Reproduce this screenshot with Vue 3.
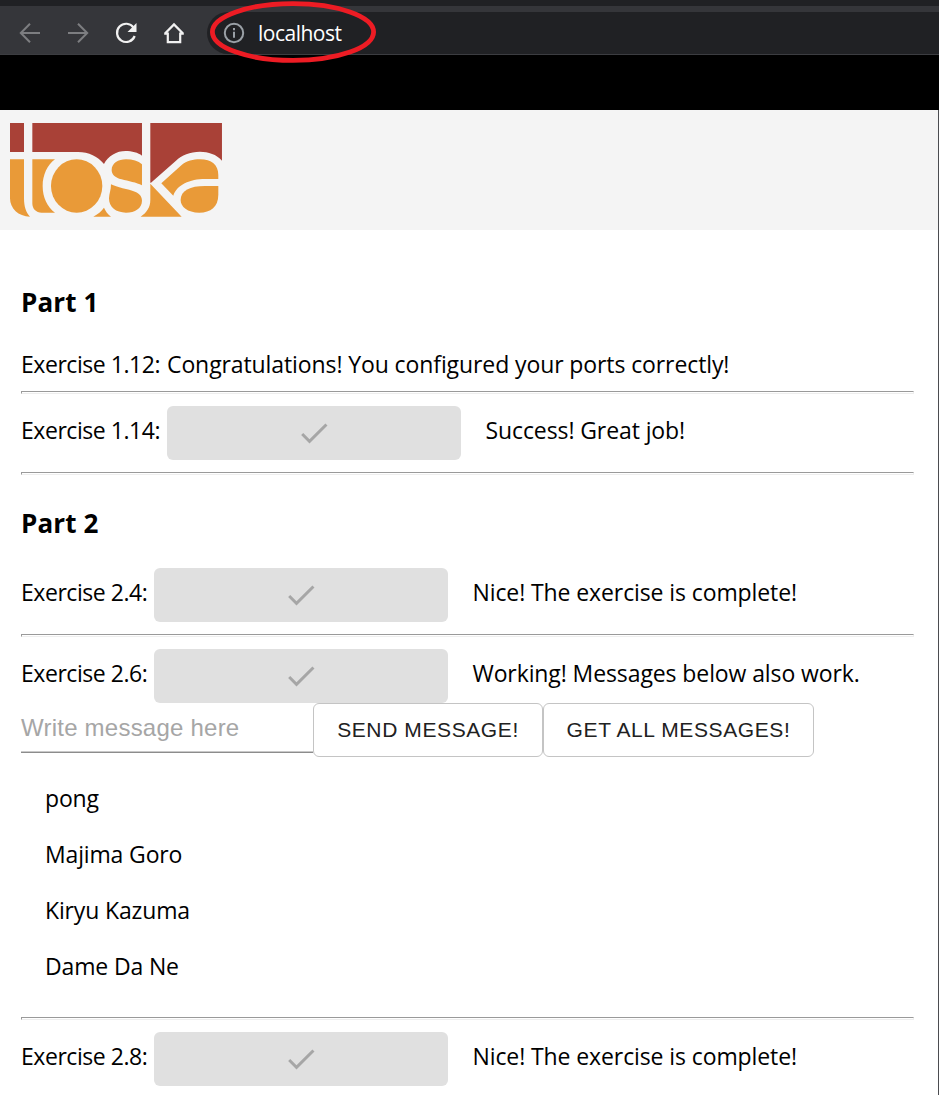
<script setup>
const messages = ['pong', 'Majima Goro', 'Kiryu Kazuma', 'Dame Da Ne']
const checkPath = 'M9 16.17 4.83 12l-1.42 1.41L9 19 21 7l-1.41-1.41z'
</script>

<template>
  <div class="window">
    <div class="tabstrip"></div>
    <nav class="toolbar">
      <svg class="nav" viewBox="0 0 24 24"><path class="dim" d="M22 12H3M12 2.8 2.8 12l9.2 9.2" /></svg>
      <svg class="nav" viewBox="0 0 24 24"><path class="dim" d="M2 12h19M12 2.8l9.2 9.2-9.2 9.2" /></svg>
      <svg class="nav" viewBox="0 0 24 24">
        <path class="bright" d="M19.6 6.6A9.1 9.1 0 1 0 20.7 15" />
        <path class="solid" d="M22.5 2v9h-9z" />
      </svg>
      <svg class="nav" viewBox="0 0 24 24"><path class="bright" d="M3 12.6 12 3.4l9 9.2M2.2 12.6h3.6v8.6h12.4v-8.6h3.6" /></svg>
      <div class="address">
        <svg class="info" viewBox="0 0 22 22">
          <circle cx="11" cy="11" r="9.2" />
          <path d="M11 9.8v6M11 6v2.3" />
        </svg>
        <span>localhost</span>
      </div>
      <svg class="marker" viewBox="0 0 168 64"><ellipse cx="84" cy="32" rx="80.6" ry="28.4" /></svg>
    </nav>
    <div class="band"></div>

    <div class="page">
      <header class="brand">
        <svg class="logo" viewBox="30 39 637 282">
          <g fill="#a94137">
            <path d="M30 39h42v87H30z" />
            <path d="M97 39H426V137C415 128 395 123 377 123C350 123 325 137 312 162C295 140 265 126 235 126H97Z" />
            <path d="M451 39H666V152C650 133 625 125 600 125C570 125 545 136 528 152L453 218H451Z" />
          </g>
          <g fill="#e99a38">
            <path d="M30 148H72V265C72 290 78 308 90 320C55 320 30 295 30 265Z" />
            <path d="M97 148H165C142 165 128 195 128 228C128 262 142 292 165 308H125C108 308 97 297 97 280Z" />
            <ellipse cx="230" cy="228" rx="77" ry="80" />
            <path d="M280 320C293 313 305 304 312 293C317 304 323 313 333 320Z" />
            <path d="M426 163V226C410 218 385 213 365 208C345 203 335 193 335 180C335 160 355 148 378 148C398 148 415 153 426 163Z" />
            <path d="M333 223C350 232 385 238 405 245C420 251 426 260 426 272C426 295 405 308 378 308C348 308 327 292 327 265C328 250 333 240 333 223Z" />
            <path d="M451 221L545 320H422C440 308 451 292 451 270Z" />
            <path d="M484 220L545 165C560 153 580 148 600 148C635 148 655 165 655 195V207H615C570 207 530 225 520 257Z" />
            <path d="M655 228V255C655 290 632 308 598 308C562 308 542 290 542 270C542 242 570 228 615 228Z" />
          </g>
        </svg>
      </header>

      <main>
        <h2>Part 1</h2>
        <div class="row plain">
          <span class="label wide">Exercise 1.12:</span>
          <span>Congratulations! You configured your ports correctly!</span>
        </div>
        <hr />
        <div class="row">
          <span class="label wide">Exercise 1.14:</span>
          <button class="done"><svg viewBox="0 0 24 24"><path :d="checkPath" /></svg></button>
          <span class="result">Success! Great job!</span>
        </div>
        <hr />
        <h2 class="second">Part 2</h2>
        <div class="row">
          <span class="label">Exercise 2.4:</span>
          <button class="done"><svg viewBox="0 0 24 24"><path :d="checkPath" /></svg></button>
          <span class="result">Nice! The exercise is complete!</span>
        </div>
        <hr />
        <div class="row joined">
          <span class="label">Exercise 2.6:</span>
          <button class="done"><svg viewBox="0 0 24 24"><path :d="checkPath" /></svg></button>
          <span class="result">Working! Messages below also work.</span>
        </div>
        <div class="form">
          <div class="field">Write message here</div>
          <button class="outlined send">SEND MESSAGE!</button>
          <button class="outlined all">GET ALL MESSAGES!</button>
        </div>
        <ul>
          <li v-for="m in messages" :key="m">{{ m }}</li>
        </ul>
        <hr />
        <div class="row">
          <span class="label">Exercise 2.8:</span>
          <button class="done"><svg viewBox="0 0 24 24"><path :d="checkPath" /></svg></button>
          <span class="result">Nice! The exercise is complete!</span>
        </div>
      </main>
    </div>
  </div>
</template>

<style>
body { margin: 0; overflow: hidden; }
</style>

<style scoped>
* { box-sizing: border-box; }
.window {
  width: 939px; height: 1095px; overflow: hidden; background: #fff; color: #000;
  font-family: "Open Sans", "Noto Sans", sans-serif; font-size: 23px; letter-spacing: -0.1px;
}
.tabstrip { height: 6px; background: #202124; }
.toolbar { position: relative; display: flex; align-items: center; gap: 24px; height: 49px; padding: 5px 0 0 18px; background: #35363a; border-bottom: 1px solid #3c3d41; }
.nav { flex: none; width: 24px; height: 24px; fill: none; }
.dim { stroke: #7d7e81; stroke-width: 2; }
.bright { stroke: #f1f1f1; stroke-width: 2.2; }
.solid { fill: #f1f1f1; }
.address {
  display: flex; align-items: center; flex: 1; height: 42px; margin-left: -3px; padding-left: 16px;
  border-radius: 21px 0 0 21px; background: #202124; color: #fff; font-size: 21px; letter-spacing: -0.5px;
}
.address span { margin-left: 13px; line-height: 42px; }
.info { width: 22px; height: 22px; fill: none; stroke: #9aa0a6; stroke-width: 2; }
.marker { position: absolute; left: 209px; top: -6px; width: 168px; height: 64px; fill: none; stroke: #ed1c24; stroke-width: 4.8; }
.band { height: 55px; background: #000; }
.page { height: 985px; border-right: 1px solid #4b4c50; }
.brand { height: 120px; padding: 13px 0 0 10px; background: #f4f4f4; }
.logo { display: block; width: 212.3px; height: 94px; }
main { padding: 0 24px 0 21px; }
h2 { margin: 0; padding-top: 54px; height: 115px; font-size: 26px; line-height: 36px; font-weight: 700; letter-spacing: 0.1px; }
h2.second { padding-top: 18px; height: 81px; }
.row { display: flex; height: 66px; white-space: nowrap; line-height: 48px; }
.row.plain { height: 46px; line-height: 38px; }
.row.joined { height: 54px; }
hr { width: 893px; height: 3px; margin: 0 0 12px; border: 1px solid; border-color: #9a9a9a #eee #eee #9a9a9a; }
.label { flex: none; width: 133px; letter-spacing: -0.45px; }
.label.wide { width: 146px; }
button { font: inherit; padding: 0; margin: 0; }
.done { display: flex; flex: none; align-items: center; justify-content: center; width: 294px; height: 54px; border: 0; border-radius: 6px; background: #e0e0e0; }
.done svg { width: 36px; height: 36px; fill: #a6a6a6; }
.result { margin-left: 24.5px; }
.form { display: flex; height: 54px; }
.field { width: 292px; height: 50px; border-bottom: 1px solid #8c8c8c; box-shadow: inset 0 -1px #c9c9c9; color: #a6a6a6; font: 24px/50px "Liberation Sans", Arial, sans-serif; letter-spacing: 0.23px; }
.outlined { height: 54px; border: 1px solid #c4c4c4; border-radius: 6px; background: #fff; color: #212121; font: 21px/52px "Liberation Sans", Arial, sans-serif; letter-spacing: 0.6px; white-space: nowrap; }
.send { width: 230px; }
.all { width: 271px; }
ul { list-style: none; margin: 0; padding: 14px 0 0 24px; height: 260px; }
li { height: 56px; line-height: 55px; letter-spacing: -0.15px; }
</style>
